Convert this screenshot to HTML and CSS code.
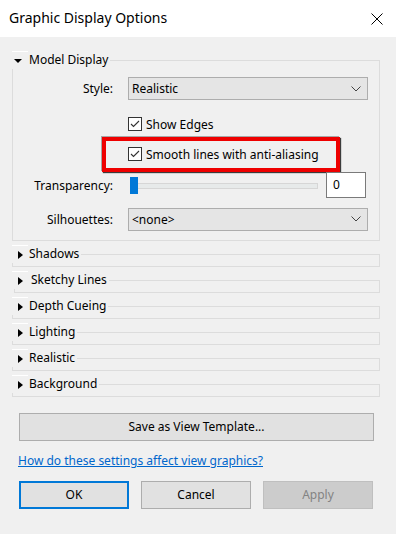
FILE: index.html
```html
<!DOCTYPE html>
<html lang="en">
<head>
  <meta charset="UTF-8">
  <meta name="viewport" content="width=device-width, initial-scale=1.0">
  <title>Graphic Display Options</title>
  <link rel="stylesheet" href="styles.css">
</head>
<body>
  <div class="dialog">
    <div class="titlebar">
      <span class="title">Graphic Display Options</span>
      <svg class="close" width="12" height="12" viewBox="0 0 12 12">
        <path d="M0.5 0.5 L11.5 11.5 M11.5 0.5 L0.5 11.5" stroke="#000" stroke-width="1" fill="none"/>
      </svg>
    </div>

    <div class="content">
      <div class="group open">
        <div class="group-head">
          <span class="caret"><span class="tri down"></span></span>
          <span class="group-name">Model Display</span>
          <span class="rule"></span>
        </div>
        <div class="group-body">
          <div class="row row-style">
            <span class="label">Style:</span>
            <div class="select"><span>Realistic</span><svg width="10" height="6" viewBox="0 0 10 6"><path d="M0.5 0.5 L5 5 L9.5 0.5" stroke="#444" fill="none"/></svg></div>
          </div>
          <div class="row row-check">
            <span class="label"></span>
            <label class="check">
              <svg width="14" height="14" viewBox="0 0 14 14"><rect x="0.5" y="0.5" width="13" height="13" fill="#fff" stroke="#333"/><path d="M3 7 L5.5 9.5 L11 4" stroke="#333" stroke-width="1.1" fill="none"/></svg>
              Show Edges
            </label>
          </div>
          <div class="row row-check marked">
            <span class="label"></span>
            <label class="check">
              <svg width="14" height="14" viewBox="0 0 14 14"><rect x="0.5" y="0.5" width="13" height="13" fill="#fff" stroke="#333"/><path d="M3 7 L5.5 9.5 L11 4" stroke="#333" stroke-width="1.1" fill="none"/></svg>
              Smooth lines with anti-aliasing
            </label>
            <div class="highlight"></div>
          </div>
          <div class="row row-slider">
            <span class="label">Transparency:</span>
            <div class="slider">
              <div class="track"></div>
              <div class="thumb"></div>
            </div>
            <div class="number">0</div>
          </div>
          <div class="row row-sil">
            <span class="label">Silhouettes:</span>
            <div class="select"><span>&lt;none&gt;</span><svg width="10" height="6" viewBox="0 0 10 6"><path d="M0.5 0.5 L5 5 L9.5 0.5" stroke="#444" fill="none"/></svg></div>
          </div>
        </div>
      </div>

      <div class="group">
        <div class="group-head"><span class="caret"><span class="tri right"></span></span><span class="group-name">Shadows</span><span class="rule"></span></div>
        <div class="group-body"></div>
      </div>
      <div class="group shifted">
        <div class="group-head"><span class="caret"><span class="tri right"></span></span><span class="group-name">Sketchy Lines</span><span class="rule"></span></div>
        <div class="group-body"></div>
      </div>
      <div class="group">
        <div class="group-head"><span class="caret"><span class="tri right"></span></span><span class="group-name">Depth Cueing</span><span class="rule"></span></div>
        <div class="group-body"></div>
      </div>
      <div class="group">
        <div class="group-head"><span class="caret"><span class="tri right"></span></span><span class="group-name">Lighting</span><span class="rule"></span></div>
        <div class="group-body"></div>
      </div>
      <div class="group">
        <div class="group-head"><span class="caret"><span class="tri right"></span></span><span class="group-name">Realistic</span><span class="rule"></span></div>
        <div class="group-body"></div>
      </div>
      <div class="group">
        <div class="group-head"><span class="caret"><span class="tri right"></span></span><span class="group-name">Background</span><span class="rule"></span></div>
        <div class="group-body"></div>
      </div>

      <button class="btn wide">Save as View Template...</button>
      <a class="help" href="#">How do these settings affect view graphics?</a>

      <div class="actions">
        <button class="btn default">OK</button>
        <button class="btn">Cancel</button>
        <button class="btn disabled">Apply</button>
      </div>
    </div>
  </div>
</body>
</html>
```

FILE: styles.css
```css
body { margin: 0; font-family: "Noto Sans", Arial, sans-serif; font-size: 12px; color: #000; background: #f0f0f0; }
.dialog { width: 396px; height: 534px; overflow: hidden; background: #f0f0f0; }

.titlebar { height: 37px; background: #fff; display: flex; align-items: center; justify-content: space-between; padding: 0 13px 0 9px; box-sizing: border-box; }
.title { font-size: 14px; line-height: 20px; padding-bottom: 1px; }
.close { display: block; }

.content { padding-top: 14px; }

.group { margin: 0 16px 4px 12px; }
.group-head { display: flex; height: 18px; }
.caret { width: 16px; border-top: 1px solid #fff; box-sizing: border-box; display: flex; align-items: center; justify-content: center; }
.tri { display: block; width: 0; height: 0; }
.tri.down { border-left: 4px solid transparent; border-right: 4px solid transparent; border-top: 4px solid #000; margin-left: -4px; }
.tri.right { border-top: 4px solid transparent; border-bottom: 4px solid transparent; border-left: 5px solid #000; }
.group-name { padding-left: 1px; line-height: 18px; white-space: nowrap; }
.rule { flex: 1; margin: 9px 0 0 2px; border-top: 1px solid #dcdcdc; border-right: 1px solid #dcdcdc; }
.group-body { border: 1px solid #dcdcdc; border-top: none; height: 3px; }
.group.open .group-body { height: auto; padding: 8px 11px 9px 0; }
.group.shifted .group-name { padding-left: 3px; }
.group.shifted .group-body { margin-left: 2px; }

.row { display: flex; align-items: center; position: relative; }
.label { width: 100px; margin-right: 15px; text-align: right; white-space: nowrap; }
.row-style { height: 23px; margin-bottom: 9px; }
.row-check { height: 30px; }
.row-slider { height: 26px; margin-top: 3px; }
.row-sil { height: 24px; margin-top: 9px; }

.select { flex: 1; height: 23px; box-sizing: border-box; background: #e5e5e5; border: 1px solid #adadad; display: flex; align-items: center; justify-content: space-between; padding: 0 6px 0 3px; }
.select svg { display: block; }

.check { display: flex; align-items: center; gap: 4px; white-space: nowrap; }
.check svg { display: block; }

.highlight { position: absolute; left: 89px; top: -2px; width: 238px; height: 35px; box-sizing: border-box; border: 4px solid #ee0000; box-shadow: 1px 1px 1px rgba(0,0,0,0.75), -1px -1px 0 rgba(0,0,0,0.3); }

.slider { position: relative; width: 188px; height: 17px; margin-left: 2px; }
.track { margin-top: 6px; height: 4px; background: #e7eaea; border: 1px solid #d6d6d6; }
.thumb { position: absolute; left: 0; top: 0; width: 8px; height: 17px; background: #0078d7; }
.number { margin-left: 8px; width: 40px; height: 26px; box-sizing: border-box; background: #fff; border: 1px solid #7a7a7a; padding: 3px 0 0 6px; }

.btn { font-family: inherit; font-size: 12px; color: #000; background: #e1e1e1; border: 1px solid #adadad; height: 28px; padding: 0 0 2px; box-sizing: border-box; }
.btn.wide { display: block; width: 355px; margin: 16px 0 0 19px; }
.help { display: inline-block; margin: 11px 0 0 18px; color: #0066cc; text-decoration: underline; }
.actions { display: flex; gap: 12px; margin: 12px 0 0 19px; }
.actions .btn { width: 110px; }
.btn.default { border: 2px solid #0078d7; }
.btn.disabled { background: #cccccc; border-color: #bfbfbf; color: #838383; }
```
